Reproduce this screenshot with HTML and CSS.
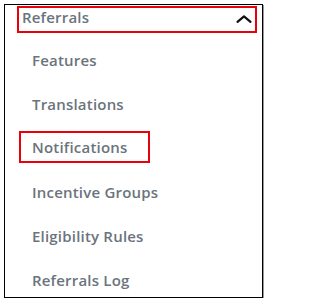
FILE: index.html
```html
<!DOCTYPE html>
<html>
<head>
<meta charset="utf-8">
<link rel="stylesheet" href="styles.css">
</head>
<body>
<div class="panel">
  <div class="header">
    <span class="header-title">Referrals</span>
    <svg class="chevron" width="16" height="8" viewBox="0 0 16 8"><path d="M1.5 6.8 L8 1.3 L14.5 6.8" fill="none" stroke="#111" stroke-width="2.2" stroke-linecap="round" stroke-linejoin="round"/></svg>
  </div>
  <ul class="menu">
    <li class="item"><span class="link">Features</span></li>
    <li class="item"><span class="link">Translations</span></li>
    <li class="item"><span class="link link-boxed">Notifications</span></li>
    <li class="item"><span class="link">Incentive Groups</span></li>
    <li class="item"><span class="link">Eligibility Rules</span></li>
    <li class="item"><span class="link">Referrals Log</span></li>
  </ul>
</div>
</body>
</html>
```
FILE: styles.css
```css
html, body {
  margin: 0;
  padding: 0;
  background: #fff;
}
body {
  font-family: "Open Sans", "Liberation Sans", sans-serif;
  font-weight: 600;
  font-size: 15px;
  letter-spacing: 0.2px;
  color: #6b747c;
}
.panel {
  box-sizing: border-box;
  margin: 4px 0 0 4px;
  width: 259px;
  height: 294px;
  border: 1px solid #000;
  box-shadow: 1px 1px 0 #9a9a9a;
  background: #fff;
}
.header {
  box-sizing: border-box;
  margin: 1px 0 0 12px;
  width: 240px;
  height: 27px;
  border: 2px solid #e8000b;
  display: flex;
  align-items: center;
  justify-content: space-between;
  padding: 0 3px 5px 3px;
}
.header-title {
  line-height: 18px;
}
.chevron {
  display: block;
  margin-top: 4px;
}
.menu {
  list-style: none;
  margin: 5px 0 0 0;
  padding: 0;
}
.item {
  height: 44px;
  display: flex;
  align-items: center;
  padding-left: 27px;
}
.link {
  line-height: 20px;
}
.link-boxed {
  box-sizing: border-box;
  margin-left: -13px;
  margin-bottom: 3px;
  height: 32px;
  display: flex;
  align-items: center;
  padding: 0 21px 0 11px;
  border: 2px solid #e8000b;
}
```
